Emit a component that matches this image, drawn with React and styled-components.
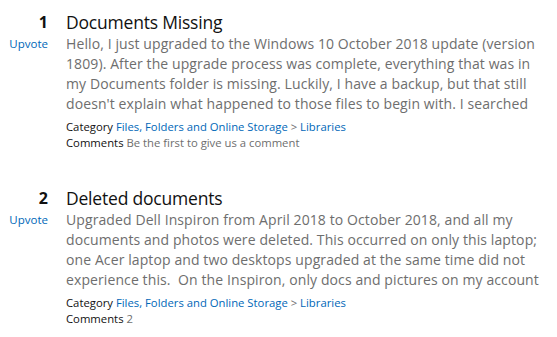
import React from 'react'
import styled, { createGlobalStyle } from 'styled-components'

const GlobalStyle = createGlobalStyle`
	body {
		margin: 0;
		background: #fff;
		font-family: 'Open Sans', 'Noto Sans', sans-serif;
	}
`
const List = styled.div`
	display: flex;
	flex-direction: column;
	gap: 35px;
	padding: 10px 0 0 0;
	width: 557px;
	box-sizing: border-box;
`
const Item = styled.div`
	display: grid;
	grid-template-columns: 48px 1fr;
	column-gap: 18px;
`
const Side = styled.div`
	display: flex;
	flex-direction: column;
	align-items: flex-end;
`
const Rank = styled.div`
	font-size: 16px;
	font-weight: 700;
	line-height: 24px;
	color: #111;
`
const Upvote = styled.a`
	font-size: 11.5px;
	line-height: 20px;
	color: #0067b8;
	text-decoration: none;
`
const Main = styled.div`
	display: flex;
	flex-direction: column;
	padding-right: 14px;
`
const Title = styled.h2`
	margin: 0;
	font-size: 17.5px;
	font-weight: 400;
	letter-spacing: -0.2px;
	line-height: 24px;
	color: #111;
`
const Body = styled.p`
	margin: 0;
	font-size: 14px;
	letter-spacing: 0.1px;
	line-height: 20px;
	max-height: 80px;
	overflow: hidden;
	color: #6e6e6e;
`
const Meta = styled.div`
	font-size: 11.3px;
	line-height: 16px;
	color: #111;
	margin-top: ${(p) => (p.first ? '5px' : '0')};
`
const Link = styled.a`
	color: #0067b8;
	text-decoration: none;
`
const Muted = styled.span`
	color: #6e6e6e;
`

// only the part of each post that fits in the four-line preview
const posts = [
	{
		rank: 1,
		title: 'Documents Missing',
		body:
			"Hello, I just upgraded to the Windows 10 October 2018 update (version 1809). After the upgrade process was complete, everything that was in my Documents folder is missing. Luckily, I have a backup, but that still doesn't explain what happened to those files to begin with. I searched",
		comments: 'Be the first to give us a comment',
	},
	{
		rank: 2,
		title: 'Deleted documents',
		body:
			'Upgraded Dell Inspiron from April 2018 to October 2018, and all my documents and photos were deleted. This occurred on only this laptop; one Acer laptop and two desktops upgraded at the same time did not experience this.\u00a0 On the Inspiron, only docs and pictures on my account',
		comments: '2',
	},
]

const App = () => {
	return (
		<>
			<GlobalStyle />
			<List>
				{posts.map((item) => (
					<Item key={item.rank}>
						<Side>
							<Rank>{item.rank}</Rank>
							<Upvote href="#">Upvote</Upvote>
						</Side>
						<Main>
							<Title>{item.title}</Title>
							<Body>{item.body}</Body>
							<Meta first>
								Category <Link href="#">Files, Folders and Online Storage</Link>{' '}
								<Muted>&gt;</Muted> <Link href="#">Libraries</Link>
							</Meta>
							<Meta>
								Comments <Muted>{item.comments}</Muted>
							</Meta>
						</Main>
					</Item>
				))}
			</List>
		</>
	)
}

export default App
